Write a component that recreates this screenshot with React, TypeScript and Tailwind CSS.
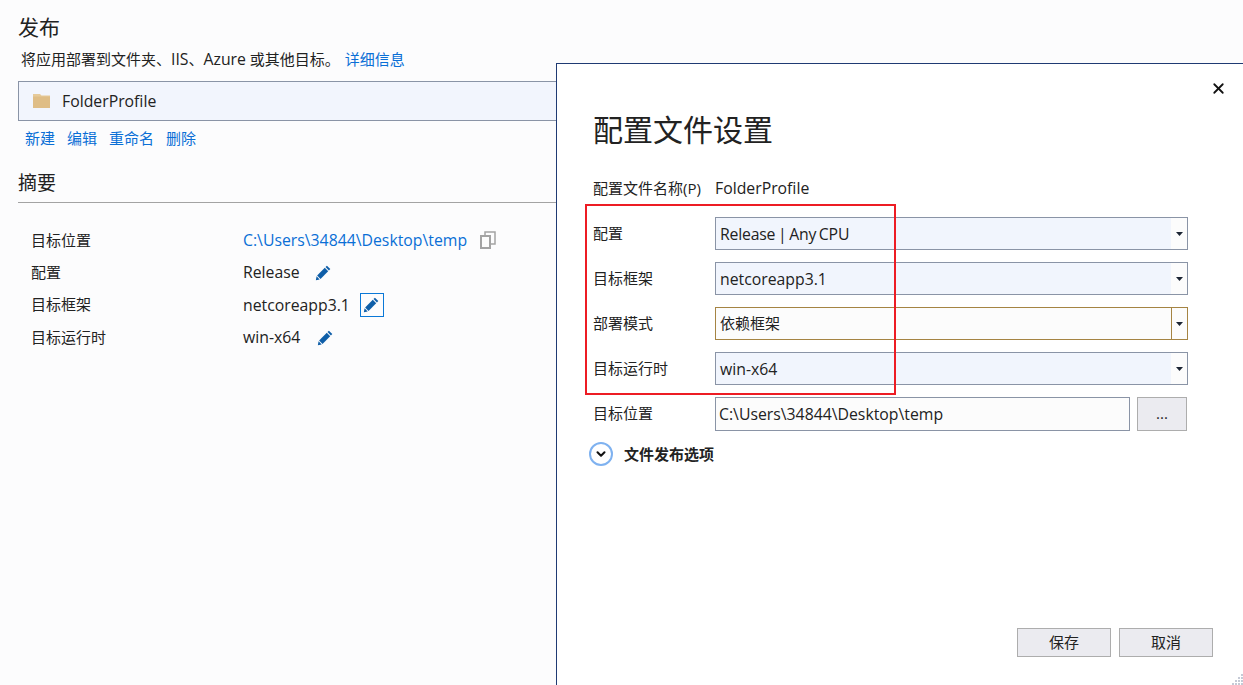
import type { ReactNode } from "react";
import { X, ChevronDown } from "lucide-react";

const SUMMARY_LINK_ACTIONS = ["新建", "编辑", "重命名", "删除"];

function Lat({ children }: { children: ReactNode }) {
  return <span className="text-[15.8px] pt-[2px]">{children}</span>;
}

function Pencil({ className = "" }: { className?: string }) {
  return (
    <svg viewBox="0 0 16 16" width="17" height="17" className={className}>
      <path d="M11.2 1.6 14.4 4.8 13.1 6.1 9.9 2.9Z" fill="#0e5ea8" />
      <path d="M9.2 3.6 12.4 6.8 5.2 14 2 10.8Z" fill="#0e5ea8" />
      <path d="M1.5 11.6 4.4 14.5 0.8 15.3Z" fill="#0e5ea8" />
    </svg>
  );
}

function CopyIcon() {
  return (
    <svg viewBox="0 0 16 18" width="16" height="18" fill="none" stroke="#a3a3a3" strokeWidth="2">
      <rect x="1" y="5" width="9" height="12" fill="#fcfcfc" />
      <path d="M5 4V1h10v12h-4" strokeWidth="1.5" />
    </svg>
  );
}

function Caret() {
  return (
    <svg viewBox="0 0 7 4" width="7" height="4">
      <path d="M0 0h7L3.5 4Z" fill="#1b2433" />
    </svg>
  );
}

function SummaryRow({ label, children, h }: { label: string; children: ReactNode; h: string }) {
  return (
    <div className={`flex items-center ${h}`}>
      <div className="w-[212px] text-[#222]">{label}</div>
      <div className="flex items-center text-[#222]">{children}</div>
    </div>
  );
}

function SelectRow({ label, value, focused }: { label: string; value: ReactNode; focused?: boolean }) {
  return (
    <div className="flex items-center h-[45px]">
      <div className="w-[122px] text-[#222]">{label}</div>
      <div
        className={`flex w-[473px] h-[33px] border ${
          focused ? "border-[#a58443] bg-[#fcfcfc]" : "border-[#8a94a6] bg-[#f1f5fd]"
        }`}
      >
        <div className={`flex-1 pl-1 text-[#222] ${focused ? "leading-[31px]" : "leading-[33px]"}`}>{value}</div>
        <div
          className={`w-4 flex items-center justify-center bg-[#fcfcfc] ${
            focused ? "border-l border-[#a58443]" : ""
          }`}
        >
          <Caret />
        </div>
      </div>
    </div>
  );
}

export default function App() {
  return (
    <div className="relative flex h-[685px] w-[1243px] overflow-hidden bg-[#fcfcfd] font-['Open_Sans','Noto_Sans_CJK_SC',sans-serif] text-[15px]">
      {/* left page */}
      <div className="w-[556px] shrink-0 pl-[18px] pt-[10px]">
        <h1 className="text-[21px] leading-[34px] text-[#222]">发布</h1>
        <p className="pl-[3px] mt-[4px] leading-[22px] text-[#222]">
          将应用部署到文件夹、<Lat>IIS</Lat>、<Lat>Azure</Lat> 或其他目标。
          <span className="ml-[5px] text-[#0a6fd6]">详细信息</span>
        </p>
        <div className="mt-[11px] flex items-center h-[40px] border border-r-0 border-[#8a94a6] bg-[#f2f5fd] pl-[14px]">
          <svg viewBox="0 0 17 14" width="17" height="14">
            <path d="M0 0h7l1.5 1.5H17V14H0Z" fill="#e6ca9a" />
            <rect x="0" y="2.5" width="17" height="11.5" fill="#dfbd86" />
          </svg>
          <span className="ml-[12px] pt-[2px] text-[#222]"><Lat>FolderProfile</Lat></span>
        </div>
        <div className="flex gap-[12px] pl-[7px] mt-[6px] leading-[22px] text-[#0a6fd6]">
          {SUMMARY_LINK_ACTIONS.map((a) => (
            <span key={a}>{a}</span>
          ))}
        </div>
        <h2 className="mt-[19px] text-[19px] leading-[30px] text-[#222] pb-[4px] border-b border-[#a3a3a3]">摘要</h2>
        <div className="pl-[13px] pt-[21px]">
          <SummaryRow label="目标位置" h="h-[32px]">
            <span className="pt-[2px] text-[#0a6fd6]"><Lat>C:\Users\34844\Desktop\temp</Lat></span>
            <span className="ml-[13px]"><CopyIcon /></span>
          </SummaryRow>
          <SummaryRow label="配置" h="h-[32px]">
            <Lat>Release</Lat>
            <Pencil className="ml-[15px]" />
          </SummaryRow>
          <SummaryRow label="目标框架" h="h-[33px]">
            <Lat>netcoreapp3.1</Lat>
            <span className="ml-[10px] flex items-center justify-center w-[24px] h-[24px] border border-[#0a78d7]">
              <Pencil />
            </span>
          </SummaryRow>
          <SummaryRow label="目标运行时" h="h-[32px]">
            <Lat>win-x64</Lat>
            <Pencil className="ml-[17px]" />
          </SummaryRow>
        </div>
      </div>

      {/* settings panel */}
      <div className="mt-[63px] flex-1 flex flex-col border-l border-t border-[#1f3a73] bg-white pl-[36px]">
        <div className="flex justify-end pr-[16px] pt-[16px] h-[34px]">
          <X size={17} strokeWidth={2.5} color="#111" />
        </div>
        <h2 className="mt-[12px] text-[30px] leading-[40px] text-[#222]">配置文件设置</h2>
        <div className="flex items-center mt-[26px] h-[24px]">
          <div className="w-[122px] text-[#222] whitespace-nowrap">配置文件名称(P)</div>
          <div className="pt-[2px] text-[#222]"><Lat>FolderProfile</Lat></div>
        </div>
        <div className="mt-[11px]">
          <SelectRow
            label="配置"
            value={<span className="tracking-[-0.2px] [word-spacing:-1.2px]"><Lat>Release | Any CPU</Lat></span>}
          />
          <SelectRow label="目标框架" value={<Lat>netcoreapp3.1</Lat>} />
          <SelectRow label="部署模式" value="依赖框架" focused />
          <SelectRow label="目标运行时" value={<Lat>win-x64</Lat>} />
          <div className="flex items-center h-[45px]">
            <div className="w-[122px] text-[#222]">目标位置</div>
            <div className="w-[415px] h-[34px] border border-[#8a94a6] bg-[#fcfcfc] pl-[3px] leading-[32px] text-[#222]">
              <Lat>C:\Users\34844\Desktop\temp</Lat>
            </div>
            <div className="ml-[7px] w-[50px] h-[34px] border border-[#adadad] bg-[#ebebf0] text-center leading-[30px] text-[#222]">
              ...
            </div>
          </div>
        </div>
        <div className="flex items-center -ml-[4px] h-[36px]">
          <span className="flex items-center justify-center w-[24px] h-[24px] rounded-full border-2 border-[#7fb2f0] bg-white">
            <ChevronDown size={14} strokeWidth={3.5} color="#111" />
          </span>
          <span className="ml-[11px] font-bold text-[#222]">文件发布选项</span>
        </div>
        <div className="flex-1" />
        <div className="flex justify-end gap-[8px] pr-[30px] pb-[28px]">
          <button className="w-[94px] h-[29px] border border-[#adadad] bg-[#ebebf0] text-[#222]">保存</button>
          <button className="w-[94px] h-[29px] border border-[#adadad] bg-[#ebebf0] text-[#222]">取消</button>
        </div>
      </div>

      {/* red annotation drawn over the screenshot */}
      <div className="absolute left-[585px] top-[204px] w-[311px] h-[191px] border-2 border-[#ed1c24] pointer-events-none" />

      {/* resize grip */}
      <svg viewBox="0 0 12 12" width="12" height="12" className="absolute right-0 bottom-0" fill="#c5cad6">
        <rect x="10" y="1" width="2" height="2" />
        <rect x="7" y="4" width="2" height="2" />
        <rect x="10" y="4" width="2" height="2" />
        <rect x="4" y="7" width="2" height="2" />
        <rect x="7" y="7" width="2" height="2" />
        <rect x="10" y="7" width="2" height="2" />
        <rect x="1" y="10" width="2" height="2" />
        <rect x="4" y="10" width="2" height="2" />
        <rect x="7" y="10" width="2" height="2" />
        <rect x="10" y="10" width="2" height="2" />
      </svg>
    </div>
  );
}
